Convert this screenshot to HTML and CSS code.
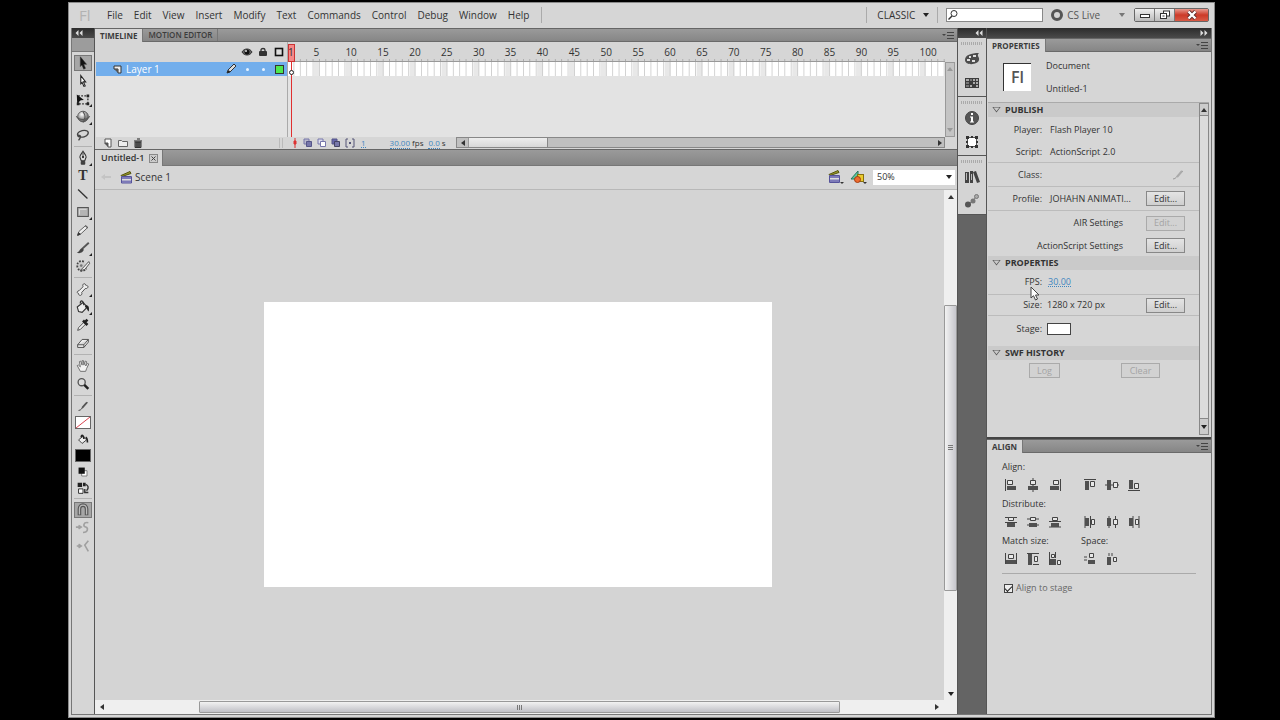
FILE: index.html
```html
<!DOCTYPE html>
<html lang="en">
<head>
<meta charset="utf-8">
<title>Untitled-1</title>
<link rel="stylesheet" href="styles.css">
</head>
<body>
<div class="window">
  <header class="titlebar">
    <span class="logo">Fl</span>
    <nav class="menu">
      <button>File</button><button>Edit</button><button>View</button><button>Insert</button><button>Modify</button><button>Text</button><button>Commands</button><button>Control</button><button>Debug</button><button>Window</button><button>Help</button>
    </nav>
    <div class="bar-space"></div>
    <button class="workspace-switch">CLASSIC <span class="tri-down"></span></button>
    <label class="search">
      <svg width="12" height="12" viewBox="0 0 12 12"><circle cx="7" cy="4.500" r="3" fill="none" stroke="#333"/><path d="M5 7L1.500 10.500" stroke="#333" stroke-width="1.500"/></svg>
      <input type="text" aria-label="Search">
    </label>
    <button class="cslive"><svg width="14" height="14" viewBox="0 0 14 14"><circle cx="7" cy="7" r="4.500" fill="none" stroke="#555" stroke-width="3"/></svg>CS Live<span class="tri-down dim"></span></button>
    <div class="win-buttons">
      <button aria-label="Minimize"><svg width="12" height="10" viewBox="0 0 12 10"><rect x="1.500" y="4.500" width="9" height="3" fill="#fff" stroke="#333"/></svg></button>
      <button aria-label="Restore"><svg width="12" height="10" viewBox="0 0 12 10"><rect x="4.500" y="1" width="6" height="5" fill="#fff" stroke="#333"/><rect x="1.500" y="3.500" width="6" height="5" fill="#fff" stroke="#333"/><path d="M3.500 6h2" stroke="#333"/></svg></button>
      <button class="close" aria-label="Close"><svg width="12" height="10" viewBox="0 0 12 10"><path d="M2.500 1.500L9.500 8.500M9.500 1.500L2.500 8.500" stroke="#5b2a2a" stroke-width="4"/><path d="M2.500 1.500L9.500 8.500M9.500 1.500L2.500 8.500" stroke="#fff" stroke-width="2.400"/></svg></button>
    </div>
  </header>

  <div class="workspace">
    <aside class="toolbar">
      <div class="dark-head"><span class="chev"><svg width="8" height="6" viewBox="0 0 8 6"><path d="M3.500 0v6L.5 3zM7.500 0v6L4.500 3z" fill="#ddd"/></svg></span></div>
      <div class="toolbar-cap"></div>
      <div class="tools">
        <button class="tool active" aria-label="Selection"><svg viewBox="0 0 18 18"><path d="M6 2l7 8.500H9.800l2 4.500-2 .9-2-4.700L6 13z" fill="#111" stroke="#333" stroke-width=".6"/></svg></button>
        <button class="tool" aria-label="Subselection"><svg viewBox="0 0 18 18"><path d="M6.500 3l5.500 7H9.500l2 4.500-1.500.6-2-4.600-1.500 1.500z" fill="#fff" stroke="#222" stroke-width="1.200"/></svg></button>
        <button class="tool more" aria-label="Free transform"><svg viewBox="0 0 18 18"><rect x="3.500" y="5.500" width="11" height="9" fill="none" stroke="#333" stroke-width="1.500" stroke-dasharray="2 1.500"/><path d="M2 4l8 6-3.500.5L2.500 14z" fill="#111"/><path d="M13 4h3v3h-3zM13 13h3v3h-3zM2 13h3v3H2z" fill="#222"/></svg></button>
        <button class="tool more" aria-label="3D rotation"><svg viewBox="0 0 18 18"><defs><radialGradient id="ball" cx="40%" cy="30%" r="70%"><stop offset="0" stop-color="#fff"/><stop offset="1" stop-color="#555"/></radialGradient></defs><circle cx="9" cy="8.500" r="6" fill="url(#ball)" stroke="#555"/><path d="M1.500 8c2 5 13 5 15 0M9 3c3 4 3 8 0 12" fill="none" stroke="#555" stroke-width="1.200"/></svg></button>
        <button class="tool" aria-label="Lasso"><svg viewBox="0 0 18 18"><path d="M5 11C1 9 3 5 8 4s8 1 6.500 4S8 12 5 11s-2-2 0-1.500 1 3-1 5.500" fill="none" stroke="#444" stroke-width="1.500"/></svg></button>
        <hr>
        <button class="tool more" aria-label="Pen"><svg viewBox="0 0 18 18"><path d="M9 1.500c1 2 3.500 4 3.500 6.500L11 12H7L5.500 8C5.500 5.500 8 3.500 9 1.500z" fill="#ddd" stroke="#333" stroke-width="1.200"/><path d="M9 3v5M7 13h4v3H7z" stroke="#333" fill="#444"/><circle cx="9" cy="8" r="1.200" fill="#222"/></svg></button>
        <button class="tool glyph" aria-label="Text">T</button>
        <button class="tool" aria-label="Line"><svg viewBox="0 0 18 18"><path d="M3.500 4L14 14" stroke="#333" stroke-width="1.500"/></svg></button>
        <button class="tool more" aria-label="Rectangle"><svg viewBox="0 0 18 18"><rect x="3" y="4" width="12" height="10" fill="#b4b4b4" stroke="#555" stroke-width="1.200"/><path d="M5 12V6h8" fill="none" stroke="#ddd"/></svg></button>
        <button class="tool" aria-label="Pencil"><svg viewBox="0 0 18 18"><path d="M3 15l1.500-4.500L12 4l2.500 2L7 13z" fill="#eee" stroke="#555"/><path d="M3 15l1-3 2 1.800zM11.500 4.500L14 6.500" fill="#333" stroke="#333"/></svg></button>
        <button class="tool more" aria-label="Brush"><svg viewBox="0 0 18 18"><path d="M15.500 3L8 10" stroke="#555" stroke-width="2.200"/><path d="M2 14c3 0 3-4 6-5l2 2c-1 3-5 5-8 3z" fill="#444"/></svg></button>
        <button class="tool" aria-label="Deco"><svg viewBox="0 0 18 18"><path d="M10 4C5 2 1 6 3 11s7 4 10 1" fill="#ccc" stroke="#444" stroke-width="2" stroke-dasharray="2 1.500"/><path d="M15.500 4L10 10l-4 4 5-1 5.500-7z" fill="#eee" stroke="#444"/><circle cx="7" cy="8.500" r="1.500" fill="#777"/></svg></button>
        <hr>
        <button class="tool more" aria-label="Bone"><svg viewBox="0 0 18 18"><path d="M5 16c-1 0-1-2-1-2-2 0-2-3 .5-3L9 6.500C8 4 10 2 11.500 3.500c0 1 .5 1.500 1.500 1.500 3 .5 1.500 4-1.500 3.500L7.500 13c1 1.500-.5 4-2.500 3z" fill="#eee" stroke="#444"/></svg></button>
        <button class="tool more" aria-label="Paint bucket"><svg viewBox="0 0 18 18"><path d="M2.500 9L9 4l5 5-6 6-4-1z" fill="#eee" stroke="#333" stroke-width="1.200"/><path d="M6 5c0-5 4-3 4 2" fill="none" stroke="#333" stroke-width="1.500"/><path d="M12 7c4 0 4 3 3.500 7-2-1-1.500-4-4.500-5z" fill="#222"/></svg></button>
        <button class="tool" aria-label="Eyedropper"><svg viewBox="0 0 18 18"><path d="M3 15l1-3 6-6 2 2-6 6z" fill="#eee" stroke="#444"/><path d="M9 4l5 5M11 6l3-3" stroke="#222" stroke-width="3"/></svg></button>
        <button class="tool" aria-label="Eraser"><svg viewBox="0 0 18 18"><path d="M3 11l5-6h7l-5 6zM3 11v3h7l5-6V5M10 11v3" fill="#eee" stroke="#444"/></svg></button>
        <hr>
        <button class="tool" aria-label="Hand"><svg viewBox="0 0 18 18"><path d="M6 15L2.500 8.500l1.500-.5 2 2-1-6 1.500-.5L8 8V3h1.500L10 8l1.500-4.500 1.500.5-1 5 2-3 1.500.7L13 12l-1 3z" fill="#f2f2f2" stroke="#666"/></svg></button>
        <button class="tool" aria-label="Zoom"><svg viewBox="0 0 18 18"><circle cx="7.500" cy="7" r="4" fill="#ddd" stroke="#555" stroke-width="1.500"/><path d="M10.500 10l4.500 4.500" stroke="#222" stroke-width="2.800"/></svg></button>
        <hr>
        <button class="tool short" aria-label="Stroke color"><svg viewBox="0 0 18 18"><path d="M4 14c3 0 4-3 6-5l4-4" fill="none" stroke="#333"/><path d="M8 11l5.500-6" stroke="#555" stroke-width="2"/></svg></button>
        <button class="swatch none" aria-label="No stroke"><svg viewBox="0 0 14 11" preserveAspectRatio="none"><path d="M0 11L14 0" stroke="#d8434f"/></svg></button>
        <button class="tool short" aria-label="Fill color"><svg viewBox="0 0 18 18"><path d="M4 10l5-4 4 4-5 4z" fill="#eee" stroke="#333"/><path d="M7 7c0-4 3-2 3 2M12 7c2 1 2 3 2 6" fill="none" stroke="#222" stroke-width="1.800"/></svg></button>
        <button class="swatch" aria-label="Fill black"></button>
        <button class="tool short" aria-label="Black and white"><svg viewBox="0 0 18 18"><path d="M7.500 7.500h6v6h-6z" fill="#fff" stroke="#777"/><path d="M4 4h7v7H4z" fill="#111"/></svg></button>
        <button class="tool short" aria-label="Swap colors"><svg viewBox="0 0 18 18"><path d="M3 3h5v5H3zM9 3h3v4H9z" fill="#222"/><path d="M4 10h5v5H4z" fill="#fff" stroke="#222"/><path d="M12 5c3 1 4 4 1 7M11 10v4h4" fill="none" stroke="#333" stroke-width="1.600"/></svg></button>
        <hr>
        <button class="tool active" aria-label="Snap to objects"><svg viewBox="0 0 18 18"><path d="M5 15V8c0-6 8-6 8 0v7" fill="none" stroke="#555" stroke-width="4"/><path d="M5 14V8c0-6 8-6 8 0v6" fill="none" stroke="#bbb" stroke-width="1.500"/></svg></button>
        <button class="tool" aria-label="Smooth"><svg viewBox="0 0 18 18"><path d="M1 8h5M4 6l3 2-3 2M15 3c-6-1-6 4-3 5s3 6-3 6" fill="none" stroke="#a0a0a0" stroke-width="1.800"/></svg></button>
        <button class="tool" aria-label="Straighten"><svg viewBox="0 0 18 18"><path d="M2 9h4M4 7l3 2-3 2M15 3l-4 5 4 7" fill="none" stroke="#a0a0a0" stroke-width="1.800"/></svg></button>
      </div>
    </aside>

    <main class="main">
      <div class="tabs">
        <button class="tab on">TIMELINE</button><button class="tab">MOTION EDITOR</button>
        <button class="panel-menu" aria-label="Panel menu"><svg width="12" height="8" viewBox="0 0 12 8"><path d="M0 3h4L2 5zM5 1h7v1H5zM5 4h7v1H5zM5 7h7v1H5z" fill="#444"/></svg></button>
      </div>
      <section class="timeline">
        <div class="tl-body">
          <div class="layers">
            <div class="layer-head">
              <svg width="12" height="10" viewBox="0 0 12 10"><path d="M1 5c2-4 8-4 10 0-2 4-8 4-10 0z" fill="#666" stroke="#333"/><circle cx="6" cy="5" r="2.500" fill="#111"/><circle cx="5" cy="4" r="1" fill="#ddd"/></svg>
              <svg width="10" height="10" viewBox="0 0 10 10"><path d="M3 5V3c0-2 4-2 4 0v2" fill="none" stroke="#333" stroke-width="1.300"/><rect x="1" y="4" width="8" height="5" rx="1" fill="#333"/></svg>
              <svg width="10" height="10" viewBox="0 0 10 10"><rect x="1.500" y="1.500" width="7" height="7" fill="#ddd" stroke="#111" stroke-width="1.600"/></svg>
            </div>
            <div class="layer-row">
              <svg class="layer-icon" width="9" height="9" viewBox="0 0 9 9"><path d="M1 1h7v7H5V4H1z" fill="#eee" stroke="#333"/><path d="M1 4l4 4V4z" fill="#555"/></svg>
              <span class="layer-name">Layer 1</span>
              <svg width="12" height="12" viewBox="0 0 12 12"><path d="M2 10l1-3 6-6 2 2-6 6z" fill="#ddd" stroke="#333"/><path d="M2 10l1.500-3 2 2z" fill="#222"/></svg>
              <i class="dot"></i><i class="dot"></i><i class="outline"></i>
            </div>
          </div>
          <div class="frames">
            <div class="ruler">
              <span class="n1">1</span><span>5</span><span>10</span><span>15</span><span>20</span><span>25</span><span>30</span><span>35</span><span>40</span><span>45</span><span>50</span><span>55</span><span>60</span><span>65</span><span>70</span><span>75</span><span>80</span><span>85</span><span>90</span><span>95</span><span>100</span>
            </div>
            <div class="cells"></div>
            <i class="playhead"></i><i class="playline"></i><i class="keyframe"></i>
          </div>
          <div class="tl-vscroll"><span class="tri-up"></span><span class="tri-down"></span></div>
        </div>
        <div class="tl-foot">
          <div class="foot-left">
            <svg width="10" height="10" viewBox="0 0 10 10"><path d="M2 1h6v8H5V5H2z" fill="#fff" stroke="#555"/><path d="M1 5l4 4V5z" fill="#555"/></svg>
            <svg width="10" height="10" viewBox="0 0 10 10"><path d="M.5 2.500h3l1 1h5v5h-9z" fill="#eee" stroke="#666"/></svg>
            <svg width="10" height="10" viewBox="0 0 10 10"><path d="M2 4h6v5.500H2z" fill="#777" stroke="#333"/><path d="M1 3h8M4 1h3M4 4v5M6 4v5" stroke="#222"/></svg>
            <i class="foot-grip"></i>
          </div>
          <div class="foot-mid">
            <svg width="8" height="10" viewBox="0 0 8 10"><path d="M4 0v10" stroke="#d33"/><path d="M3 3h2v3H3z" stroke="#d33" fill="#d33"/></svg>
            <svg width="10" height="10" viewBox="0 0 10 10"><path d="M1 1h5v5H1z" fill="#bbc" stroke="#77a"/><path d="M3.500 3.500h5v5h-5z" fill="#77a" stroke="#558"/></svg>
            <svg width="10" height="10" viewBox="0 0 10 10"><path d="M1 1h5v5H1z" fill="#dde" stroke="#77a"/><path d="M3.500 3.500h5v5h-5z" fill="#fff" stroke="#77a"/></svg>
            <svg width="10" height="10" viewBox="0 0 10 10"><path d="M1 1h5v5H1z" fill="#66a" stroke="#558"/><path d="M3.500 3.500h5v5h-5z" fill="#77a" stroke="#446"/></svg>
            <svg width="10" height="10" viewBox="0 0 10 10"><path d="M3 1H1v8h2M7 1h2v8H7" fill="none" stroke="#557"/><path d="M4 4h2v2H4z" fill="#557"/></svg>
            <a class="hot frame-no" href="#">1</a>
            <span class="fps"><a class="hot" href="#">30.00</a> fps</span>
            <span class="secs"><a class="hot" href="#">0.0</a> s</span>
          </div>
          <div class="tl-hscroll"><span class="cap"><span class="tri-left"></span></span><span class="thumb"></span><span class="tri-right"></span></div>
        </div>
      </section>
      <div class="doc-tabs"><div class="doc-tab">Untitled-1 <button aria-label="Close document"><svg width="9" height="9" viewBox="0 0 9 9"><rect x=".5" y=".5" width="8" height="8" fill="#ccc" stroke="#888"/><path d="M2.500 2.500l4 4M6.500 2.500l-4 4" stroke="#444"/></svg></button></div></div>
      <div class="scene-bar">
        <svg width="10" height="8" viewBox="0 0 10 8"><path d="M0 4l4-3v2h6v2H4v2z" fill="#c4c4c4"/></svg>
        <svg class="clap" width="13" height="13" viewBox="0 0 13 13"><path d="M1 4.500l9-4 1 2-9 3z" fill="#9a9a2a" stroke="#555510"/><path d="M1.500 5.500h10v6.500h-10z" fill="#ddd" stroke="#55529a"/><path d="M2 6h9v2H2zM2 9.500h9V12H2z" fill="#7d7ab8"/></svg>
        <span class="scene-name">Scene 1</span>
        <button class="scene-btn" aria-label="Edit scene"><svg width="17" height="15" viewBox="0 0 17 15"><path d="M1 4.500l9-4 1 2-9 3z" fill="#9a9a2a" stroke="#555510"/><path d="M1.500 5.500h10v7h-10z" fill="#ddd" stroke="#55529a"/><path d="M2 6h9v2H2zM2 9.500h9V12H2z" fill="#7d7ab8"/><path d="M12 12h4l-2 2z" fill="#333"/></svg></button>
        <button class="scene-btn" aria-label="Edit symbols"><svg width="18" height="15" viewBox="0 0 18 15"><path d="M1 9L8 1v8z" fill="#58c9a0" stroke="#26735a"/><rect x="7.500" y="4.500" width="6" height="7" fill="#eacb2e" stroke="#887010"/><circle cx="7.500" cy="9.500" r="3" fill="#ee6b2e" stroke="#a33c10"/><path d="M13 12h4l-2 2z" fill="#333"/></svg></button>
        <div class="zoom"><select aria-label="Zoom level"><option>50%</option></select><span class="tri-down"></span></div>
      </div>
      <div class="stage-wrap">
        <div class="stage-area"><div class="canvas"></div></div>
        <div class="vscroll"><span class="tri-up"></span><span class="rail"><span class="vthumb"><i></i></span></span><span class="tri-down"></span></div>
        <div class="hscroll"><span class="tri-left"></span><span class="hrail"><span class="hthumb"><i></i></span></span><span class="tri-right"></span></div>
        <div class="corner"></div>
      </div>
    </main>

    <aside class="dock">
      <div class="dark-head"><span class="chev end"><svg width="8" height="6" viewBox="0 0 8 6"><path d="M3.500 0v6L.5 3zM7.500 0v6L4.500 3z" fill="#ddd"/></svg></span></div>
      <div class="dock-group">
        <button aria-label="Color"><svg width="16" height="16" viewBox="0 0 16 16"><path d="M1 9c0-5 6-7 14-7-3 3 1 4 0 7-1 5-14 6-14 0z" fill="#4c4c4c"/><path d="M3 8h3v2H3zM5 5h2v2H5zM9 4h3v2H9zM8 9h3v2H8z" fill="#ddd"/></svg></button>
        <button aria-label="Swatches"><svg width="16" height="16" viewBox="0 0 16 16"><path d="M1 3h14v10H1z" fill="#3c3c3c"/><path d="M2 4h3v2H2zM9 4h2v2H9zM12 4h2v2h-2zM9 7h2v2H9zM12 7h2v2h-2zM6 10h2v2H6zM12 10h2v2h-2z" fill="#aaa"/><path d="M6 4h2v2H6zM2 7h3v2H2zM2 10h3v2H2z" fill="#777"/></svg></button>
      </div>
      <div class="dock-group">
        <button aria-label="Info"><svg width="16" height="16" viewBox="0 0 16 16"><circle cx="8" cy="8" r="6.500" fill="#555" stroke="#444"/><path d="M7 3h2v2H7zM6 6.500h3v5h1v1H6v-1h1v-4H6z" fill="#fff"/></svg></button>
        <button aria-label="Transform"><svg width="16" height="16" viewBox="0 0 16 16"><rect x="3.500" y="3.500" width="9" height="9" fill="#fff" stroke="#555"/><path d="M2 2h3v3H2zM11 2h3v3h-3zM2 11h3v3H2zM11 11h3v3h-3zM7 2h2v2H7zM7 12h2v2H7zM2 7h2v2H2zM12 7h2v2h-2z" fill="#333"/></svg></button>
      </div>
      <div class="dock-group">
        <button aria-label="Library"><svg width="16" height="16" viewBox="0 0 16 16"><path d="M1 3h4v11H1zM6 2h3v12H6zM9 3l3-1 4 11-3 1z" fill="#444"/><path d="M2 4h1v7H2zM7 5h1v6H7z" fill="#bbb"/></svg></button>
        <button aria-label="Motion presets"><svg width="16" height="16" viewBox="0 0 16 16"><path d="M4 12l8-8" stroke="#888"/><circle cx="4" cy="11.500" r="3" fill="#555"/><circle cx="9" cy="8" r="2.500" fill="#777"/><circle cx="12.500" cy="3.500" r="2" fill="#aaa" stroke="#777"/></svg></button>
      </div>
    </aside>

    <aside class="panels">
      <div class="dark-head"><span class="chev end"><svg width="8" height="6" viewBox="0 0 8 6"><path d="M.5 0v6l3-3zM4.500 0v6l3-3z" fill="#ddd"/></svg></span></div>
      <div class="tabs"><button class="tab on">PROPERTIES</button>
        <button class="panel-menu" aria-label="Panel menu"><svg width="12" height="8" viewBox="0 0 12 8"><path d="M0 3h4L2 5zM5 1h7v1H5zM5 4h7v1H5zM5 7h7v1H5z" fill="#444"/></svg></button></div>
      <section class="props">
        <div class="doc-info"><div class="doc-badge">Fl</div><div class="doc-text"><span>Document</span><span>Untitled-1</span></div></div>
        <div class="prop-scroll">
          <div class="prop-list">
            <h2><span class="fold"></span>PUBLISH</h2>
            <div class="row tall"><span class="key">Player:</span><span>Flash Player 10</span></div>
            <div class="row line tight"><span class="key">Script:</span><span>ActionScript 2.0</span></div>
            <div class="row line"><span class="key">Class:</span><button class="pencil" aria-label="Edit class"><svg width="14" height="12" viewBox="0 0 14 12"><path d="M2 10c3 0 4-3 6-5l4-3" fill="none" stroke="#999"/><path d="M6 8l5-6" stroke="#aaa" stroke-width="2"/></svg></button></div>
            <div class="row line"><span class="key">Profile:</span><span>JOHAHN ANIMATI...</span><button class="btn">Edit...</button></div>
            <div class="row"><span class="key wide">AIR Settings</span><button class="btn" disabled>Edit...</button></div>
            <div class="row tight"><span class="key wide">ActionScript Settings</span><button class="btn">Edit...</button></div>
            <h2><span class="fold"></span>PROPERTIES</h2>
            <div class="row line tall"><span class="key">FPS:</span><a class="hot" href="#">30.00</a></div>
            <div class="row line tight near"><span class="key">Size:</span><span>1280 x 720 px</span><button class="btn">Edit...</button></div>
            <div class="row near stage-row"><span class="key">Stage:</span><button class="stage-color" aria-label="Stage color"></button></div>
            <h2><span class="fold"></span>SWF HISTORY</h2>
            <div class="history"><button class="btn small" disabled>Log</button><button class="btn" disabled>Clear</button></div>
          </div>
          <div class="prop-vscroll"><span class="cap"><span class="tri-up"></span></span><span class="cap low"><span class="tri-down"></span></span></div>
        </div>
      </section>
      <div class="tabs"><button class="tab on">ALIGN</button>
        <button class="panel-menu" aria-label="Panel menu"><svg width="12" height="8" viewBox="0 0 12 8"><path d="M0 3h4L2 5zM5 1h7v1H5zM5 4h7v1H5zM5 7h7v1H5z" fill="#444"/></svg></button></div>
      <section class="align">
        <div class="group-label"><span>Align:</span></div>
        <div class="icons">
          <button aria-label="Align left edge"><svg viewBox="0 0 14 14"><path d="M1.500 1v12" class="s"/><path d="M3.500 2.500h5v4h-5z" class="o"/><path d="M3 8h9v4H3z" class="f"/></svg></button>
          <button aria-label="Align horizontal center"><svg viewBox="0 0 14 14"><path d="M7 0v14" class="s"/><path d="M4.500 2.500h5v4h-5z" class="o"/><path d="M2 8h10v4H2z" class="f"/></svg></button>
          <button aria-label="Align right edge"><svg viewBox="0 0 14 14"><path d="M12.500 1v12" class="s"/><path d="M5.500 2.500h5v4h-5z" class="o"/><path d="M2 8h9v4H2z" class="f"/></svg></button>
          <i></i>
          <button aria-label="Align top edge"><svg viewBox="0 0 14 14"><path d="M1 1.500h12" class="s"/><path d="M7.500 3.500h4v5h-4z" class="o"/><path d="M2 3h4v9H2z" class="f"/></svg></button>
          <button aria-label="Align vertical center"><svg viewBox="0 0 14 14"><path d="M0 7h14" class="s"/><path d="M8.500 4.500h4v5h-4z" class="o"/><path d="M2 2h4v10H2z" class="f"/></svg></button>
          <button aria-label="Align bottom edge"><svg viewBox="0 0 14 14"><path d="M1 12.500h12" class="s"/><path d="M7.500 5.500h4v5h-4z" class="o"/><path d="M2 2h4v9H2z" class="f"/></svg></button>
        </div>
        <div class="group-label"><span>Distribute:</span></div>
        <div class="icons">
          <button aria-label="Distribute top edge"><svg viewBox="0 0 14 14"><path d="M1 2.500h12M1 7.500h12" class="s"/><path d="M4.500 2.500h5v3h-5z" class="o"/><path d="M3 8h8v4H3z" class="f"/></svg></button>
          <button aria-label="Distribute vertical center"><svg viewBox="0 0 14 14"><path d="M1 4h12M1 10h12" class="s"/><path d="M4.500 2.500h5v3h-5z" class="o"/><path d="M3 8h8v4H3z" class="f"/></svg></button>
          <button aria-label="Distribute bottom edge"><svg viewBox="0 0 14 14"><path d="M1 6.500h12M1 12h12" class="s"/><path d="M4.500 2.500h5v3h-5z" class="o"/><path d="M3 8h8v4H3z" class="f"/></svg></button>
          <i></i>
          <button aria-label="Distribute left edge"><svg viewBox="0 0 14 14"><path d="M2 1v12M7.500 1v12" class="s"/><path d="M8.500 4.500h3v5h-3z" class="o"/><path d="M2 3h4v8H2z" class="f"/></svg></button>
          <button aria-label="Distribute horizontal center"><svg viewBox="0 0 14 14"><path d="M4 1v12M10.500 1v12" class="s"/><path d="M8.500 4.500h4v5h-4z" class="o"/><path d="M2 3h4v8H2z" class="f"/></svg></button>
          <button aria-label="Distribute right edge"><svg viewBox="0 0 14 14"><path d="M6 1v12M12 1v12" class="s"/><path d="M8.500 4.500h3v5h-3z" class="o"/><path d="M2 3h4v8H2z" class="f"/></svg></button>
        </div>
        <div class="group-label"><span>Match size:</span><span>Space:</span></div>
        <div class="icons">
          <button aria-label="Match width"><svg viewBox="0 0 14 14"><path d="M1.500 1v11M12.500 1v11" class="s"/><path d="M4.500 2.500h5v4h-5z" class="o"/><path d="M2 8h10v4H2z" class="f"/></svg></button>
          <button aria-label="Match height"><svg viewBox="0 0 14 14"><path d="M1 1.500h12M7 12.500h6" class="s"/><path d="M8.500 4.500h3v5h-3z" class="o"/><path d="M2 2h4v11H2z" class="f"/></svg></button>
          <button aria-label="Match width and height"><svg viewBox="0 0 14 14"><path d="M1.500 0v13M7.500 0v6" class="s"/><path d="M3.500 2.500h3v3h-3zM9.500 8.500h3v4h-3z" class="o"/><path d="M2 7h6v6H2z" class="f"/></svg></button>
          <i></i>
          <button aria-label="Space vertically"><svg viewBox="0 0 14 14"><path d="M1 5h3M1 8h3" class="s"/><path d="M6.500 1.500h4v4h-4z" class="o"/><path d="M5 8h7v4H5z" class="f"/></svg></button>
          <button aria-label="Space horizontally"><svg viewBox="0 0 14 14"><path d="M4 1v3M7 1v3" class="s"/><path d="M8.500 5.500h3v4h-3z" class="o"/><path d="M2 5h4v8H2z" class="f"/></svg></button>
        </div>
        <label class="to-stage"><input type="checkbox" checked>Align to stage</label>
      </section>
    </aside>
  </div>
</div>
<svg class="cursor" width="12" height="16" viewBox="0 0 12 16"><path d="M1 1v11l2.500-2.300L5.500 14l2-1-2-4H9z" fill="#fff" stroke="#444"/></svg>
</body>
</html>
```

FILE: styles.css
```css
* { box-sizing: border-box; }
body {
  margin: 0;
  height: 100vh;
  padding: 2px 65px 2px 68px;
  background: #000;
  color: #333;
  font: 9px/12px "Open Sans", "Noto Sans", sans-serif;
  display: flex;
}
button, input, select { font: inherit; color: inherit; }
button { background: none; border: 0; padding: 0; display: flex; align-items: center; justify-content: center; }
svg { display: block; flex: none; }
h2 { margin: 0; font-size: 9px; line-height: 12px; }
.hot { color: #3f86c0; text-decoration: none; border-bottom: 1px dotted #3f86c0; line-height: 9px; }

.window { flex: 1; min-width: 0; display: flex; flex-direction: column; background: #d6d6d6; border: 1px solid #8a8a8a; }

.tri-down, .tri-up, .tri-left, .tri-right { display: block; width: 0; height: 0; border: 3px solid transparent; flex: none; }
.tri-down { border-top: 4px solid #222; border-bottom: 0; }
.tri-up { border-bottom: 4px solid #333; border-top: 0; }
.tri-left { border-right: 4px solid #333; border-left: 0; }
.tri-right { border-left: 4px solid #333; border-right: 0; }
.tri-down.dim { border-top-color: #777; }

/* title bar */
.titlebar { height: 25px; flex: none; display: flex; align-items: center; padding: 0 5px 1px 10px; }
.logo { width: 28px; font: 15px/20px "Open Sans", sans-serif; color: #b2b2b2; }
.menu { display: flex; gap: 11px; padding-right: 12px; border-right: 1px solid #aaa; line-height: 16px; font-size: 10px; }
.bar-space { flex: 1; height: 16px; border-right: 1px solid #aaa; }
.workspace-switch { gap: 8px; padding: 0 8px 0 10px; height: 16px; border-right: 1px solid #aaa; font-size: 10px; font-weight: 500; }
.search { margin-left: 8px; width: 97px; height: 14px; border: 1px solid #888; background: #fff; display: flex; align-items: center; }
.search input { border: 0; padding: 0; width: 80px; outline: 0; background: none; }
.cslive { gap: 3px; margin-left: 7px; font-size: 10px; color: #555; }
.cslive .tri-down { margin-left: 16px; }
.win-buttons { display: flex; margin-left: 9px; border: 1px solid #666; border-radius: 2px; height: 14px; }
.win-buttons button { width: 20px; border-right: 1px solid #777; background: linear-gradient(#eee, #bbb); }
.win-buttons .close { width: 33px; border: 0; background: linear-gradient(#e89a8e, #cc3a28 50%, #d85a45); }

.workspace { flex: 1; min-height: 0; margin: 0 2px 2px; border: 1px solid #777; border-top: 0; display: flex; }
.dark-head { height: 10px; flex: none; background: linear-gradient(#2c2c2c, #4a4a4a); display: flex; align-items: center; padding: 0 3px; }
.chev.end { margin-left: auto; }

/* tool strip */
.toolbar { width: 23px; flex: none; border-right: 1px solid #555; display: flex; flex-direction: column; }
.toolbar-cap { height: 14px; flex: none; background: #9c9c9c; border-bottom: 1px solid #777; }
.tools { padding: 2px 2px 0; display: flex; flex-direction: column; align-items: center; }
.tools hr { width: 18px; height: 1px; border: 0; margin: 2px 0; background: #b2b2b2; }
.tool { width: 18px; height: 18px; position: relative; }
.tool svg { width: 16px; height: 16px; }
.tool.short { height: 16px; }
.tool.active { background: #a6a6a6; border: 1px solid #777; height: 16px; margin: 1px 0; }
.tool.more::after { content: ""; position: absolute; right: 0; bottom: 1px; border-left: 3px solid transparent; border-bottom: 3px solid #222; }
.tool.glyph { font: bold 14px/18px "Liberation Serif", serif; }
.swatch { width: 16px; height: 13px; margin: 2px 0; background: #000; border: 1px solid #666; }
.swatch.none { background: #fff; }
.swatch svg { width: 14px; height: 11px; }

/* tabs */
.main { flex: 1; min-width: 0; display: flex; flex-direction: column; border-right: 1px solid #555; }
.tabs { height: 14px; flex: none; display: flex; background: linear-gradient(#9a9a9a, #868686); border-top: 1px solid #666; border-bottom: 1px solid #6a6a6a; }
.tab { font-weight: 600; font-size: 8px; line-height: 12px; height: 12px; padding: 0 5px; border-right: 1px solid #777; color: #3c3c3c; }
.tab.on { background: #d6d6d6; height: 13px; font-weight: 700; }
.panel-menu { margin-left: auto; padding-right: 3px; }

/* timeline */
.timeline { flex: none; padding: 0 2px 1px 1px; }
.tl-body { display: flex; height: 95px; }
.layers { width: 192px; flex: none; background: linear-gradient(#d6d6d6 20px, #e3e3e3 0); border-right: 1px solid #aaa; }
.layer-head { height: 20px; display: grid; grid-template-columns: 16px 16px 16px; justify-content: end; place-items: center; }
.layer-row { height: 14px; background: #72aeec; color: #fff; display: grid; grid-template-columns: 26px 1fr 16px 16px 16px 16px; align-items: center; justify-items: center; column-gap: 0; }
.layer-icon { justify-self: end; }
.layer-name { justify-self: start; font-size: 10px; padding-left: 4px; }
.dot { width: 3px; height: 3px; border-radius: 50%; background: #e8f3ff; }
.outline { width: 9px; height: 9px; background: #4ee84e; border: 1px solid #333; }
.frames { flex: 1; min-width: 0; position: relative; background: #e3e3e3; }
.ruler {
  height: 20px; display: grid; grid-template-columns: 4fr repeat(19, 5fr) 4fr; padding-top: 4px;
  font-size: 10px; border-bottom: 1px solid #999; background-color: #d6d6d6;
  background-image: linear-gradient(90deg, transparent 85%, #aaa 0);
  background-size: calc(100% / 103) 2px; background-repeat: repeat-x; background-position: 0 17px;
}
.ruler span { width: 0; white-space: nowrap; }
.n1 { position: relative; z-index: 2; }
.cells {
  height: 14px;
  background:
    linear-gradient(90deg, transparent 85%, #cfcfcf 0) 0 0 / calc(100% / 103) 100%,
    linear-gradient(90deg, #fff 80%, #e8e8e8 0) 0 0 / calc(100% * 5 / 103) 100%;
}
.playhead { position: absolute; left: 0; top: 2px; width: 7px; height: 18px; background: rgba(255, 110, 110, .75); border: 1px solid #c33; }
.playline { position: absolute; left: 3px; top: 20px; bottom: 0; width: 1px; background: #e03030; }
.keyframe { position: absolute; left: 1px; top: 28px; width: 5px; height: 5px; border: 1px solid #222; border-radius: 50%; background: #fff; }
.tl-vscroll { width: 10px; margin-top: 20px; flex: none; background: #c4c4c4; border: 1px solid #999; display: flex; flex-direction: column; align-items: center; justify-content: space-between; padding: 4px 0; }
.tl-vscroll .tri-up { border-bottom-color: #999; }
.tl-vscroll .tri-down { border-top-color: #999; }
.tl-foot { display: flex; height: 11px; align-items: center; padding-right: 10px; }
.foot-left { width: 192px; flex: none; display: flex; gap: 5px; padding-left: 7px; }
.foot-grip { margin: 0 5px 0 auto; width: 4px; border: 1px solid #bbb; border-width: 0 1px; }
.foot-mid { width: 168px; flex: none; display: flex; align-items: center; gap: 4px; padding-left: 3px; white-space: nowrap; font-size: 8px; }
.frame-no { margin-left: 2px; }
.fps { margin-left: 20px; }
.secs { margin-left: 1px; }
.tl-hscroll { flex: 1; height: 11px; border: 1px solid #888; background: #c0c0c0; display: flex; align-items: center; justify-content: space-between; padding-right: 2px; }
.tl-hscroll .cap { width: 12px; height: 9px; border-right: 1px solid #999; display: flex; align-items: center; justify-content: center; }
.tl-hscroll .thumb { width: 79px; height: 9px; margin-right: auto; background: linear-gradient(#eee, #d8d8d8); border-right: 1px solid #888; }

/* document */
.doc-tabs { height: 17px; flex: none; background: linear-gradient(#9a9a9a, #868686); border-top: 1px solid #666; border-bottom: 1px solid #777; display: flex; }
.doc-tab { background: #d6d6d6; height: 16px; padding: 0 4px 0 6px; display: flex; align-items: center; gap: 5px; border-right: 1px solid #777; font-weight: 600; }
.scene-bar { height: 24px; flex: none; display: flex; align-items: center; padding: 0 2px 1px 6px; border-bottom: 1px solid #b8b8b8; font-size: 10px; }
.clap { margin: 0 2px 0 9px; }
.scene-name { margin-right: auto; }
.scene-btn { margin-right: 5px; }
.zoom { width: 82px; height: 15px; background: #fff; display: flex; align-items: center; padding-right: 3px; }
.zoom select { appearance: none; border: 0; background: none; flex: 1; padding: 0 0 0 4px; height: 15px; outline: 0; font-size: 9px; }
.stage-wrap { flex: 1; min-height: 0; display: grid; grid-template: minmax(0, 1fr) 14px / minmax(0, 1fr) 13px; background: #d4d4d4; }
.stage-area { display: flex; align-items: center; justify-content: center; padding: 0 3px 1px 0; }
.canvas { width: 60%; aspect-ratio: 510 / 287; background: #fff; }
.vscroll, .hscroll, .corner { background: #efefef; }
.vscroll { display: flex; flex-direction: column; align-items: center; padding: 5px 0 4px; gap: 4px; }
.rail { flex: 1; width: 13px; display: grid; grid-template-rows: 21fr 59fr 20fr; }
.vthumb { grid-row: 2; border: 1px solid #999; border-radius: 1px; background: linear-gradient(90deg, #f2f2f2, #c6c6cc); display: grid; place-items: center; }
.vthumb i { width: 5px; height: 5px; border: 1px solid #777; border-width: 1px 0; background: linear-gradient(transparent 1px, #777 1px 2px, transparent 2px); }
.hscroll { display: flex; align-items: center; padding: 0 5px; gap: 4px; }
.hrail { flex: 1; height: 12px; display: grid; grid-template-columns: 11fr 78fr 11fr; }
.hthumb { grid-column: 2; border: 1px solid #999; border-radius: 1px; background: linear-gradient(#f2f2f2, #c0c0c6); display: grid; place-items: center; }
.hthumb i { width: 5px; height: 5px; border: 1px solid #777; border-width: 0 1px; background: linear-gradient(90deg, transparent 1px, #777 1px 2px, transparent 2px); }

/* icon dock */
.dock { width: 29px; flex: none; background: #646464; border-right: 1px solid #555; }
.dock-group { background: #d4d4d4; border-bottom: 1px solid #555; height: 59px; padding: 9px 0 0; position: relative; display: flex; flex-direction: column; align-items: center; }
.dock-group::before { content: ""; position: absolute; left: 3px; right: 3px; top: 4px; height: 3px; background: repeating-linear-gradient(90deg, #aaa 0 1px, transparent 1px 2px); }
.dock-group button { height: 24px; }

/* panels */
.panels { width: 224px; flex: none; display: flex; flex-direction: column; }
.props { flex: none; padding: 0 2px 2px 1px; border-bottom: 2px solid #444; }
.doc-info { display: flex; height: 51px; padding: 11px 0 0 15px; gap: 15px; border-bottom: 1px solid #aaa; }
.doc-badge { width: 28px; height: 28px; background: #fff; border: 1px solid #333; border-width: 1px 0 0 1px; font: 600 16px/27px "Open Sans", sans-serif; text-align: center; color: #555; }
.doc-text { display: flex; flex-direction: column; gap: 11px; margin-top: -3px; }
.prop-scroll { display: flex; height: 332px; }
.prop-list { flex: 1; min-width: 0; }
.prop-list h2 { height: 14px; background: #cacaca; display: flex; align-items: center; gap: 4px; padding: 0 0 1px 4px; }
.fold { width: 9px; height: 6px; background: #555; clip-path: polygon(0 0, 100% 0, 50% 100%, 0 0, 17% 17%, 50% 80%, 83% 17%, 17% 17%); }
.row { height: 24px; display: flex; align-items: center; padding-right: 14px; gap: 8px; }
.row.tall { height: 25px; }
.row.tight { height: 21px; }
.row.near { gap: 5px; }
.row.line { border-bottom: 1px solid #bcbcbc; }
.row .hot { margin-left: -2px; }
.key { width: 54px; text-align: right; }
.key.wide { width: 135px; }
.row .btn, .pencil { margin-left: auto; }
.row.stage-row { height: 30px; padding-bottom: 4px; }
.btn { width: 39px; height: 15px; border: 1px solid #888; background: linear-gradient(#e4e4e4, #cfcfcf); flex: none; }
.btn:disabled { color: #a4a4a4; border-color: #aaa; background: #d2d2d2; }
.btn.small { width: 31px; }
.stage-color { width: 24px; height: 12px; border: 1px solid #444; background: #fff; }
.history { display: flex; justify-content: space-between; padding: 3px 39px 0 41px; }
.prop-vscroll { width: 10px; border: 1px solid #888; background: #dcdcdc; display: flex; flex-direction: column; justify-content: space-between; }
.prop-vscroll .cap { height: 12px; display: grid; place-items: center; background: #ccc; border-bottom: 1px solid #888; }
.prop-vscroll .cap.low { height: 16px; border: 0; border-top: 1px solid #888; }

/* align panel */
.align { padding: 8px 15px 8px 13px; }
.group-label { display: flex; height: 13px; padding-left: 2px; }
.group-label span { width: 79px; white-space: nowrap; }
.icons { display: grid; grid-template-columns: repeat(3, 22px) 13px repeat(3, 22px); height: 24px; align-items: center; padding-bottom: 2px; }
.icons svg { width: 14px; height: 14px; }
.s { stroke: #444; fill: none; }
.o { stroke: #444; fill: #e8e8e8; }
.f { fill: #505050; }
.to-stage { display: flex; align-items: center; gap: 3px; border-top: 1px solid #aaa; margin: 1px 0 0 2px; padding: 8px 0 0 2px; color: #666; }
.to-stage input { appearance: none; width: 9px; height: 9px; margin: 0; border: 1px solid #444; background: #eee; display: grid; place-items: center; }
.to-stage input:checked::after { content: ""; width: 6px; height: 3px; border: solid #222; border-width: 0 0 1px 1px; transform: rotate(-45deg); }

.cursor { position: absolute; left: 1030px; top: 286px; }
```
